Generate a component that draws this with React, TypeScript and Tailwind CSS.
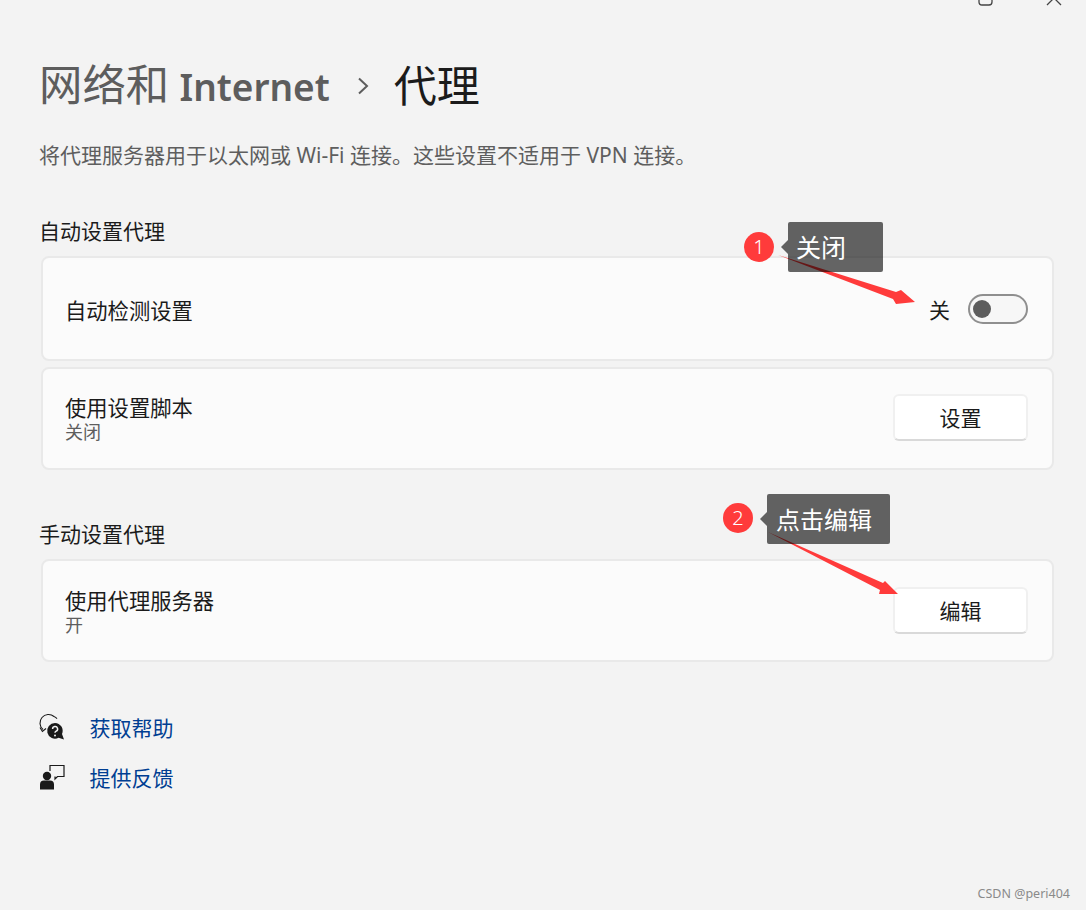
const font = { fontFamily: '"Noto Sans", "Noto Sans CJK SC", sans-serif' };

function HelpIcon() {
  return (
    <svg width="26" height="26" viewBox="0 0 26 26" className="shrink-0 overflow-visible">
      <path d="M3 13.5A8.2 8.2 0 0 1 14 0.5c1.2 .4 2.2 1.2 3 2.2" fill="none" stroke="#1a1a1a" strokeWidth="1.1" />
      <path d="M0 11.5L2.4 15.5L6 12.5" fill="none" stroke="#1a1a1a" strokeWidth="1.1" />
      <path d="M15 7a7.8 7.8 0 1 0 3.6 14.7L24 23.5L22 18A7.8 7.8 0 0 0 15 7z" fill="#1a1a1a" />
      <path d="M12.6 13a2.5 2.5 0 1 1 3.6 2.2c-.8.5-1.2.9-1.2 1.6" fill="none" stroke="#f3f3f3" strokeWidth="1.5" />
      <circle cx="15" cy="19.4" r="1" fill="#f3f3f3" />
    </svg>
  );
}

function FeedbackIcon() {
  return (
    <svg width="26" height="26" viewBox="0 0 26 26" className="shrink-0 overflow-visible">
      <circle cx="7" cy="10" r="4.2" fill="#1a1a1a" />
      <path d="M0 23.5v-5a4 4 0 0 1 4-4h6a4 4 0 0 1 4 4v5z" fill="#1a1a1a" />
      <path d="M10 5V-0.5H24V10.5H17.5L15 13V10.5" fill="none" stroke="#1a1a1a" strokeWidth="1.2" />
    </svg>
  );
}

function ActionButton({ label }: { label: string }) {
  return (
    <button className="w-[135px] h-[47px] pt-0.5 bg-white rounded-[6px] border-2 border-[#f0f0f0] border-b-[#d9d9d9] text-[21px] text-[#1b1b1b] flex items-center justify-center">
      {label}
    </button>
  );
}

function Row({ title, sub, children, height }: { title: string; sub?: string; children: React.ReactNode; height: string }) {
  return (
    <div className={`${height} ml-[2px] bg-[#fbfbfb] border-2 border-[#e9e9e9] rounded-[8px] pl-[22px] pr-6 flex items-center justify-between`}>
      <div className="flex flex-col pt-1">
        <span className="text-[21.3px] leading-[25px] text-[#1b1b1b]">{title}</span>
        {sub && <span className="text-[18px] leading-[24px] text-[#5e5e5e]">{sub}</span>}
      </div>
      {children}
    </div>
  );
}

export default function App() {
  return (
    <div style={font} className="relative w-[1086px] h-[910px] overflow-hidden bg-[#f3f3f3] pl-[39px] pr-8 pt-[55px]">
      {/* window controls, cut off by the crop */}
      <svg width="1086" height="10" className="absolute left-0 top-0">
        <path d="M979 -4v6a3 3 0 0 0 3 3h7a3 3 0 0 0 3-3v-6" fill="none" stroke="#444" strokeWidth="1.3" />
        <path d="M1047 5l7-7l7 7" fill="none" stroke="#444" strokeWidth="1.3" />
      </svg>

      <h1 className="flex items-center h-[62px] leading-[62px] font-normal">
        <span className="text-[43.4px] text-[#5d5d5d]">网络和 <span className="-ml-[1px] text-[37px] font-semibold">Internet</span></span>
        <svg width="14" height="20" viewBox="0 0 14 20" className="ml-[26px] mr-[24px]">
          <path d="M3 2.5L11 10L3 17.5" fill="none" stroke="#5d5d5d" strokeWidth="2" />
        </svg>
        <span className="text-[43px] text-[#1b1b1b]">代理</span>
      </h1>

      <p className="mt-[22px] text-[21px] leading-[32px] text-[#5e5e5e]">将代理服务器用于以太网或 Wi-Fi 连接。这些设置不适用于 VPN 连接。</p>

      <h2 className="mt-[44px] text-[21px] leading-[32px] text-[#1b1b1b] font-normal">自动设置代理</h2>
      <div className="mt-[9px] flex flex-col gap-[6px]">
        <Row title="自动检测设置" height="h-[105px]">
          <div className="flex items-center gap-[18px]">
            <span className="pt-1 text-[21px] text-[#1b1b1b]">关</span>
            <div className="w-[60px] h-[30px] rounded-full border-2 border-[#8f8f8f] bg-[#f7f7f7] flex items-center pl-[3px]">
              <div className="w-[18px] h-[18px] rounded-full bg-[#5d5d5d]" />
            </div>
          </div>
        </Row>
        <Row title="使用设置脚本" sub="关闭" height="h-[103px] pb-0.5">
          <ActionButton label="设置" />
        </Row>
      </div>

      <h2 className="mt-[48px] text-[21px] leading-[32px] text-[#1b1b1b] font-normal">手动设置代理</h2>
      <div className="mt-[9px]">
        <Row title="使用代理服务器" sub="开" height="h-[103px]">
          <ActionButton label="编辑" />
        </Row>
      </div>

      <div className="mt-[51px] ml-px flex flex-col gap-[18px]">
        <a className="flex items-center gap-[23.5px] h-8 text-[21px] text-[#003e92]"><HelpIcon />获取帮助</a>
        <a className="flex items-center gap-[23.5px] h-8 text-[21px] text-[#003e92]"><FeedbackIcon />提供反馈</a>
      </div>

      {/* annotations drawn over the screenshot */}
      <svg width="1086" height="910" className="absolute left-0 top-0 pointer-events-none">
        <polygon points="778,255 896,292 901,290 915,302 896,304 893,299" fill="#ff3b3b" />
        <polygon points="768,532 883,583 885,581 898,594 879,594 880,590" fill="#ff3b3b" />
      </svg>
      <div className="absolute left-[788px] top-[222px] w-[95px] h-[50px] pt-0.5 rounded-[2px] bg-[#000000]/60 text-white text-[25px] flex items-center pl-2">
        关闭
        <span className="absolute left-[-7px] top-[18px] w-0 h-0 border-y-[7px] border-y-transparent border-r-[7px] border-r-[#000000]/60" />
      </div>
      <div className="absolute left-[767px] top-[494px] w-[123px] h-[50px] pt-0.5 rounded-[2px] bg-[#000000]/60 text-white text-[24px] flex items-center pl-[9px]">
        点击编辑
        <span className="absolute left-[-7px] top-[18px] w-0 h-0 border-y-[7px] border-y-transparent border-r-[7px] border-r-[#000000]/60" />
      </div>
      <div className="absolute left-[744px] top-[232px] w-[30px] h-[30px] rounded-full bg-[#ff3b3b] text-white text-[20px] font-light flex items-center justify-center">1</div>
      <div className="absolute left-[723px] top-[503px] w-[30px] h-[30px] rounded-full bg-[#ff3b3b] text-white text-[20px] font-light flex items-center justify-center">2</div>

      <span className="absolute right-4 top-[886px] text-[12.5px] leading-4 text-[#8a8a8a]">CSDN @peri404</span>
    </div>
  );
}
